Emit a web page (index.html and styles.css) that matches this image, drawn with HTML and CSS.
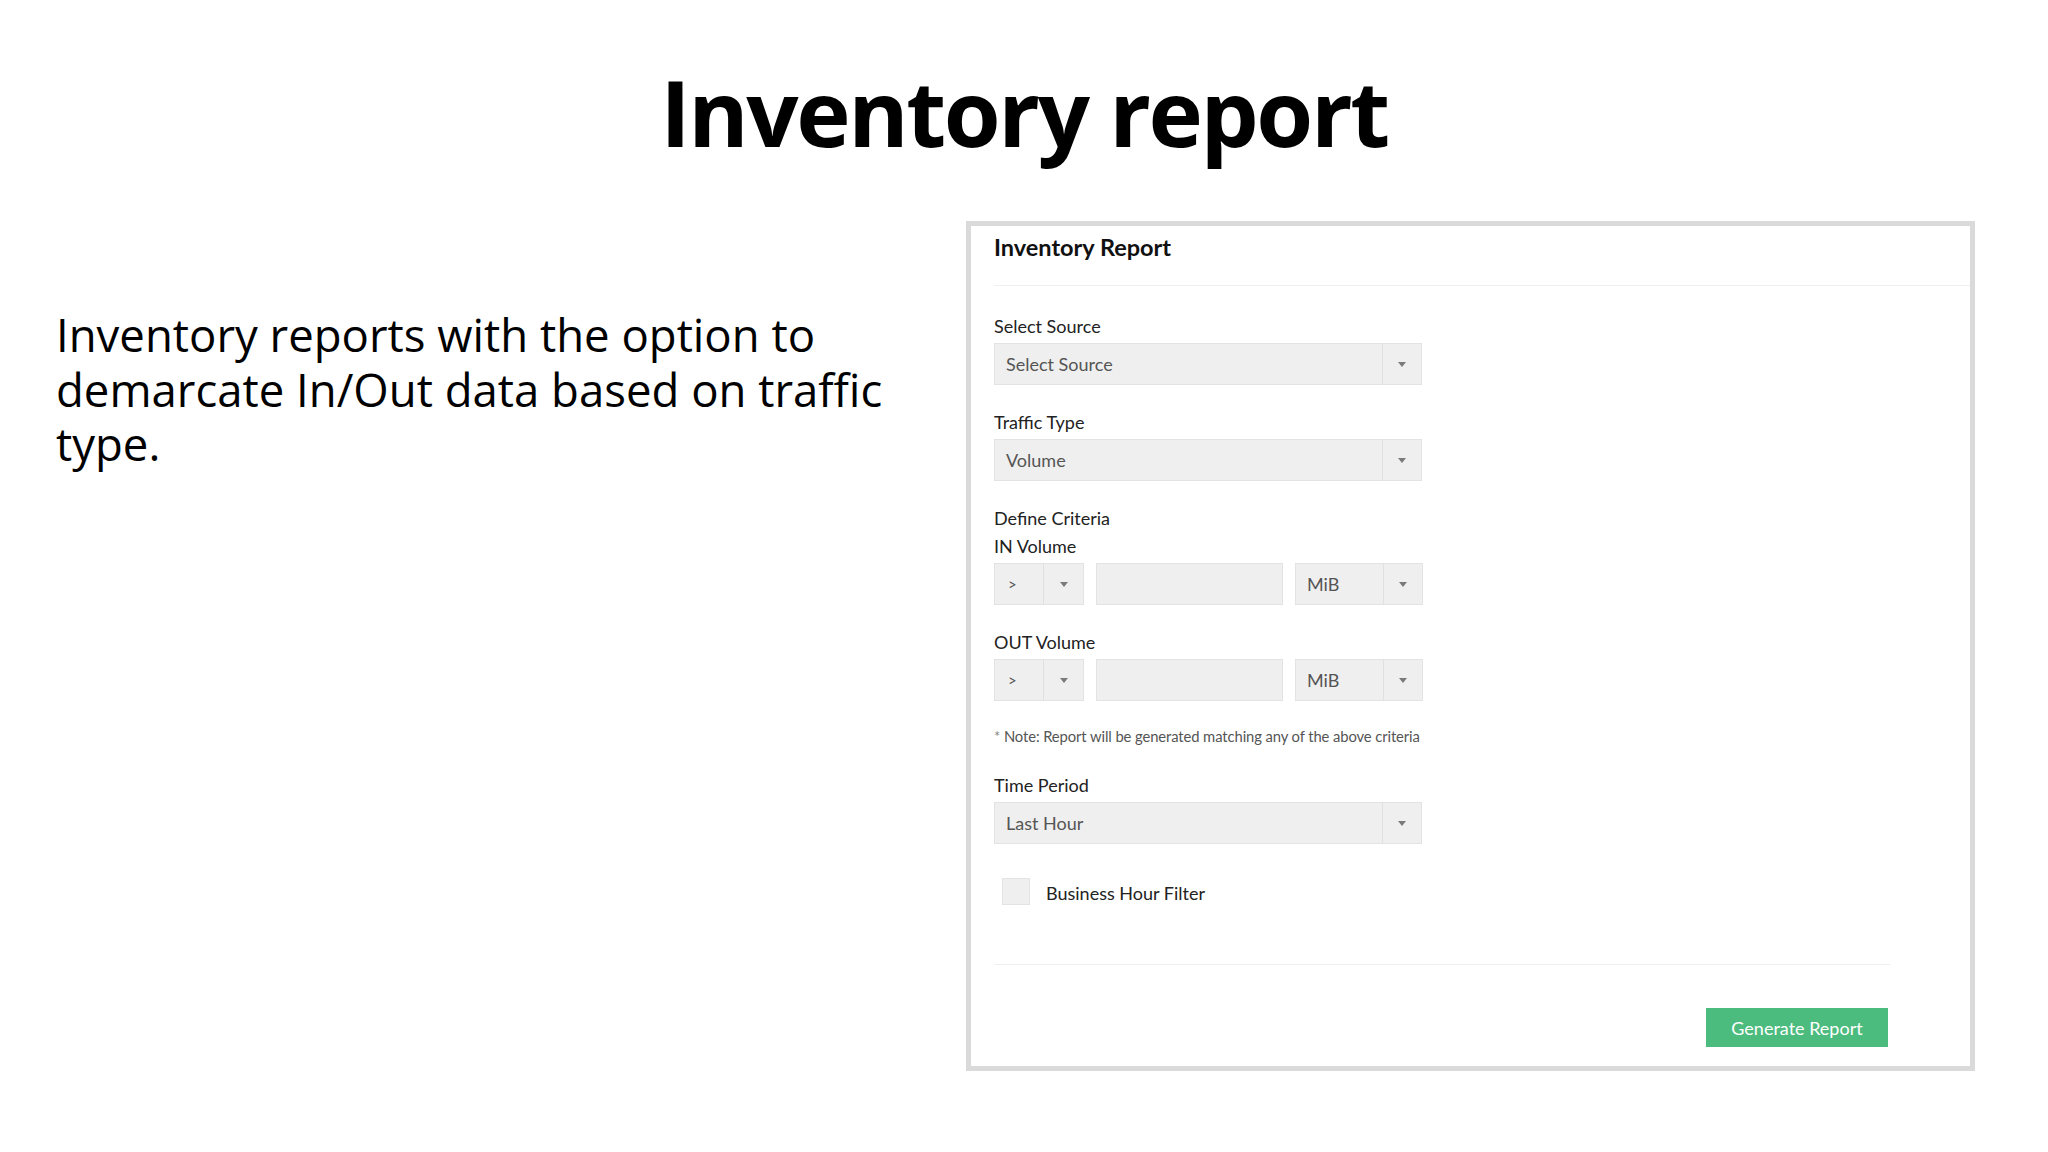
FILE: index.html
```html
<!DOCTYPE html>
<html lang="en">
<head>
<meta charset="utf-8">
<title>Inventory report</title>
<link rel="stylesheet" href="styles.css">
</head>
<body>
<h1 class="title">Inventory report</h1>
<main class="content">
  <section class="intro">
    <p>Inventory reports with the option to demarcate In/Out data based on traffic type.</p>
  </section>
  <section class="panel">
    <div class="panel-header">Inventory Report</div>
    <div class="panel-body">
      <div class="field">
        <div class="label">Select Source</div>
        <div class="select wide">
          <span class="select-text">Select Source</span>
          <span class="select-arrow"><span class="caret"></span></span>
        </div>
      </div>
      <div class="field">
        <div class="label">Traffic Type</div>
        <div class="select wide">
          <span class="select-text">Volume</span>
          <span class="select-arrow"><span class="caret"></span></span>
        </div>
      </div>
      <div class="field">
        <div class="label label-group">Define Criteria</div>
        <div class="label">IN Volume</div>
        <div class="criteria-row">
          <div class="select op">
            <span class="select-text op-text">&gt;</span>
            <span class="select-arrow"><span class="caret"></span></span>
          </div>
          <div class="text-input"></div>
          <div class="select unit">
            <span class="select-text">MiB</span>
            <span class="select-arrow"><span class="caret"></span></span>
          </div>
        </div>
      </div>
      <div class="field">
        <div class="label">OUT Volume</div>
        <div class="criteria-row">
          <div class="select op">
            <span class="select-text op-text">&gt;</span>
            <span class="select-arrow"><span class="caret"></span></span>
          </div>
          <div class="text-input"></div>
          <div class="select unit">
            <span class="select-text">MiB</span>
            <span class="select-arrow"><span class="caret"></span></span>
          </div>
        </div>
      </div>
      <p class="note"><span class="star">*</span> Note: Report will be generated matching any of the above criteria</p>
      <div class="field">
        <div class="label">Time Period</div>
        <div class="select wide">
          <span class="select-text">Last Hour</span>
          <span class="select-arrow"><span class="caret"></span></span>
        </div>
      </div>
      <label class="check-row">
        <span class="checkbox"></span>
        <span class="check-label">Business Hour Filter</span>
      </label>
      <div class="actions">
        <button class="btn-generate" type="button">Generate Report</button>
      </div>
    </div>
  </section>
</main>
</body>
</html>
```
FILE: styles.css
```css
html, body {
  margin: 0;
  padding: 0;
  background: #ffffff;
}

body {
  width: 2048px;
  height: 1152px;
  overflow: hidden;
  font-family: "Open Sans", "Liberation Sans", sans-serif;
  color: #000;
}

.title {
  margin: 56px 0 0;
  text-align: center;
  font-family: "Open Sans", sans-serif;
  font-weight: 700;
  font-size: 92px;
  line-height: 112px;
  letter-spacing: -2.4px;
  color: #000;
}

.content {
  display: flex;
  align-items: flex-start;
  margin-top: 53px;
  padding-left: 56px;
}

.intro {
  width: 880px;
  padding-top: 86px;
  flex: none;
}

.intro p {
  margin: 0;
  font-family: "Open Sans", sans-serif;
  font-size: 45.5px;
  line-height: 54.5px;
  color: #000;
}

.panel {
  margin-left: 30px;
  width: 999px;
  border: 5px solid #dadada;
  background: #fff;
  font-family: Lato, "Liberation Sans", sans-serif;
  color: #222;
  flex: none;
}

.panel-header {
  margin-left: 23px;
  padding: 7px 0 24px;
  font-size: 23.5px;
  font-weight: 700;
  line-height: 28px;
  color: #111;
  border-bottom: 1px solid #f0f0f0;
}

.panel-body {
  padding: 28px 80px 19px 23px;
}

.field {
  margin-bottom: 25px;
}

.label {
  font-size: 18px;
  line-height: 24px;
  color: #222;
  margin-bottom: 5px;
}

.label-group {
  margin-bottom: 4px;
}

.select {
  display: flex;
  height: 42px;
  box-sizing: border-box;
  background: #efefef;
  border: 1px solid #e3e3e3;
}

.select.wide {
  width: 428px;
}

.select-text {
  flex: 1;
  padding-left: 11px;
  font-size: 18px;
  line-height: 40px;
  color: #555;
}

.select-arrow {
  width: 38px;
  border-left: 1px solid #e0e0e0;
  display: flex;
  align-items: center;
  justify-content: center;
}

.caret {
  width: 0;
  height: 0;
  border-left: 4px solid transparent;
  border-right: 4px solid transparent;
  border-top: 5px solid #7a7a7a;
}

.criteria-row {
  display: flex;
  column-gap: 12px;
}

.select.op {
  width: 90px;
}

.select.op .select-arrow {
  width: 39px;
}

.op-text {
  padding-left: 13px;
  font-size: 15px;
}

.text-input {
  width: 187px;
  height: 42px;
  box-sizing: border-box;
  background: #efefef;
  border: 1px solid #e3e3e3;
}

.select.unit {
  width: 128px;
}

.note {
  margin: 7px 0 27px;
  font-size: 14.8px;
  line-height: 20px;
  color: #555;
  letter-spacing: -0.1px;
}

.star {
  color: #888;
}

.check-row {
  display: flex;
  align-items: center;
  margin-top: 34px;
  padding-left: 8px;
}

.checkbox {
  width: 28px;
  height: 27px;
  box-sizing: border-box;
  background: #efefef;
  border: 1px solid #e3e3e3;
}

.check-label {
  margin-left: 16px;
  font-size: 18px;
  line-height: 24px;
  color: #222;
  padding-top: 2px;
}

.actions {
  margin-top: 59px;
  border-top: 1px solid #f0f0f0;
  padding-top: 43px;
  display: flex;
  justify-content: flex-end;
}

.btn-generate {
  margin-right: 2px;
  width: 182px;
  height: 39px;
  border: none;
  background: #4bbb7e;
  color: #fff;
  font-family: Lato, "Liberation Sans", sans-serif;
  font-size: 18px;
  padding: 0;
  cursor: pointer;
}
```
